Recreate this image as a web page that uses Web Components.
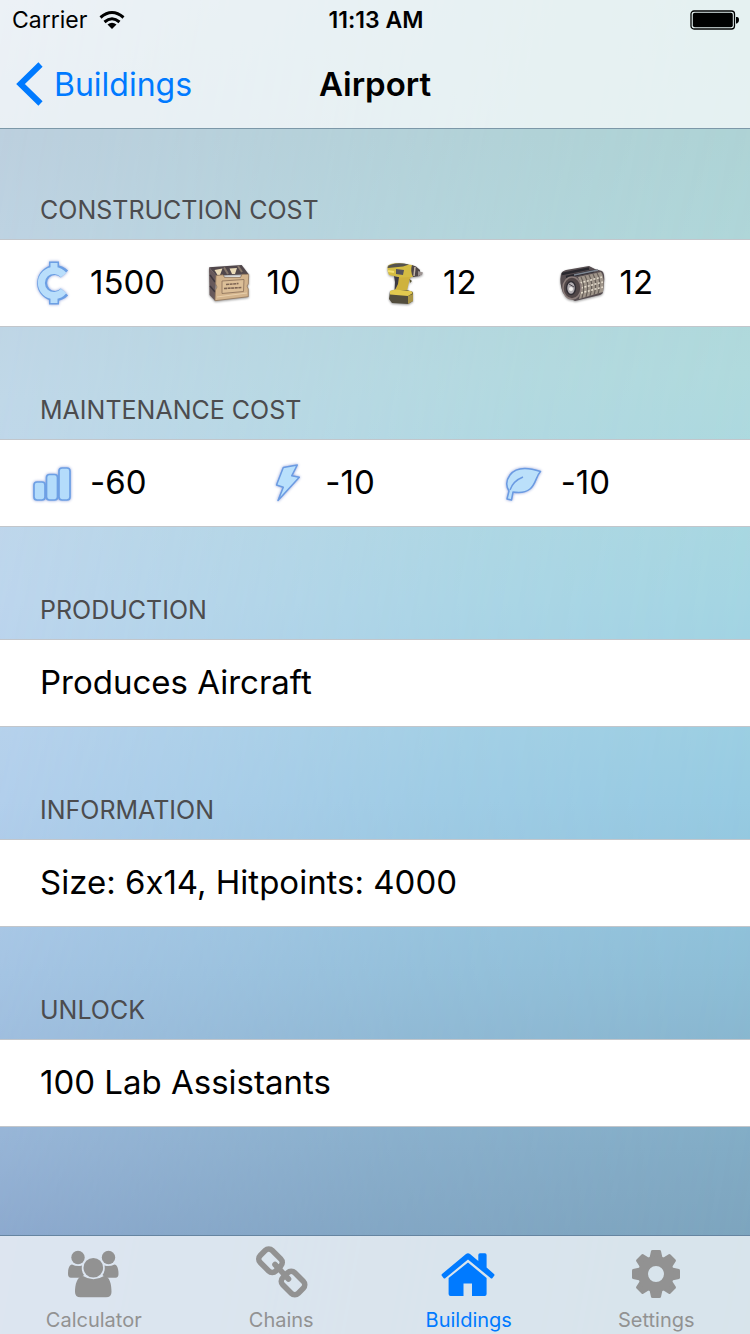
<!DOCTYPE html>
<html lang="en">
<head>
<meta charset="utf-8">
<meta name="viewport" content="width=device-width, initial-scale=1">
<title>Airport</title>
<style>
  body {
    margin: 0;
    font-family: Inter, Roboto, "Liberation Sans", sans-serif;
    /* keeps the x of "6x14" a letter */
    font-variant-ligatures: no-contextual;
    color: #000;
  }
</style>
</head>
<body>

<app-screen>
  <status-bar slot="top" carrier="Carrier" time="11:13 AM"></status-bar>
  <nav-bar slot="top" back="Buildings">Airport</nav-bar>

  <table-section heading="CONSTRUCTION COST">
    <cost-item icon="credits">1500</cost-item>
    <cost-item icon="crate">10</cost-item>
    <cost-item icon="drill">12</cost-item>
    <cost-item icon="coil">12</cost-item>
  </table-section>
  <table-section heading="MAINTENANCE COST">
    <cost-item icon="bars">-60</cost-item>
    <cost-item icon="bolt">-10</cost-item>
    <cost-item icon="leaf">-10</cost-item>
  </table-section>
  <table-section heading="PRODUCTION"><text-item>Produces Aircraft</text-item></table-section>
  <table-section heading="INFORMATION"><text-item>Size: 6x14, Hitpoints: 4000</text-item></table-section>
  <table-section heading="UNLOCK"><text-item>100 Lab Assistants</text-item></table-section>

  <tab-item slot="tabs" icon="people">Calculator</tab-item>
  <tab-item slot="tabs" icon="chain">Chains</tab-item>
  <tab-item slot="tabs" icon="house" selected>Buildings</tab-item>
  <tab-item slot="tabs" icon="gear">Settings</tab-item>
</app-screen>

<script>
/**
 * icons, all on a 60 x 60 grid
 */
const gearTeeth = [0, 45, 90, 135, 180, 225, 270, 315]
   .map(a => `<path d="M23.5 14L25 7Q25.3 6 26.5 6H33.5Q34.700 6 35 7L36.500 14Z" transform="rotate(${a} 30 30)"/>`)
   .join('');

const ICONS = {
   credits: `
<g class="glow" fill="none">
  <path d="M32 8.500V17M32 43V51.500" stroke="#6c9fe4" stroke-width="10"/>
  <path d="M42.500 21A13 13 0 1 0 42.500 39" stroke="#6c9fe4" stroke-width="10"/>
  <path d="M32 10V18M32 42V50" stroke="#b9defb" stroke-width="7"/>
  <path d="M41.700 22A12.600 12.600 0 1 0 41.700 38" stroke="#b9defb" stroke-width="7"/>
</g>`,
   crate: `
<g class="shade" stroke-linejoin="round">
  <path d="M10 14.300L42.700 12L49.700 21.300L17 22.500Z" fill="#51474b"/>
  <path d="M10 14.300L17 22.500L16 47.700L10.500 42Z" fill="#67595b"/>
  <path d="M11 22L16 29M11 33L16 39" stroke="#3e383e" stroke-width="1.500"/>
  <path d="M15.500 17L23.500 15.500L21 22L18.500 22Z M30.500 15.500L38 15L36 21L33 21Z" fill="#eadbb8"/>
  <path d="M25 14.500L29 21M39 13L43 19" stroke="#87786b" stroke-width="2"/>
  <path d="M17 22.500L24 21.800L25.500 24.500H41.500L43 21.300L49.700 21.300L49.300 31L48 33L49.300 36V43.700L16 47.700L16.500 37L18 34L16.700 31Z" fill="#d3b48d" stroke="#8a6e55" stroke-width=".7"/>
  <path d="M23 28L45 26.500L44.500 38.500L23 40.500Z" fill="#dcbf98" stroke="#8a6f58" stroke-width=".8"/>
  <path d="M27 31.500L39.500 30.500M25 35.500L43 34.500" stroke="#7d6453" stroke-width="1.600" stroke-dasharray="3 .6"/>
  <path d="M18 44L48 40" stroke="#e8cfab" stroke-width="1"/>
</g>`,
   drill: `
<g class="shade">
  <path d="M23 22L36 23L34 29L31.500 40H19L22.500 31Z" fill="#cfb23d"/>
  <path d="M19 23L24 24L23 31L19.500 38L20 29Z" fill="#3c3a43"/>
  <path d="M34.500 26L37 28L35 30Z" fill="#56502e"/>
  <path d="M12.500 14C14 10 20 10 27 10.500L37 12C41 14 41 20 38 24L26 24.500L14 22Q12 18 12.500 14Z" fill="#d4bc43"/>
  <path d="M12.500 14C16 10 25 9.500 34 11.500L28 13.500L13 15Z" fill="#55534d"/>
  <path d="M21 16L29 17L28 22L21 21Z" fill="#55545c"/>
  <path d="M13 18L19 19" stroke="#f3df70" stroke-width="2"/>
  <path d="M37 12L41 13.500L45 17V23L38 24Q35 18 37 12Z" fill="#4f4748"/>
  <path d="M40 14L39 23" stroke="#c4b7a8" stroke-width="1.500"/>
  <path d="M43 18L48 19.500L47 22L43 23Z" fill="#9b9290"/>
  <path d="M15 38L22 37H32L38 39V48L33 51L17 50L14 46Z" fill="#524d3d"/>
  <path d="M15 38L20 36.500L36 38L38 40L33 43L15 41.500Z" fill="#e1c94f"/>
  <path d="M33 43L38 41V48L33 51Z" fill="#aa9545"/>
</g>`,
   coil: `
<g class="shade">
  <path d="M9 21Q10 18 14 17L37 13L43 16L50 18Q53 20 52 30L51 39Q51 41 48 42L23 48Q16 45 11 40Q7 30 9 21Z" fill="#564d50"/>
  <path d="M10 21L37 15.500M14 24L42 18" stroke="#29282e" stroke-width="2.500"/>
  <path d="M22 22L46 17" stroke="#7e8691" stroke-width="1.500"/>
  <path d="M26 24L49 19Q53 24 51 39L27 46Q31 34 26 24Z" fill="#a0968b"/>
  <path d="M29 24Q34 32 30 45M33 23Q38 31 34 44M37 22Q42 30 38 43M41 21Q46 29 42 42M45 20Q50 28 46 41" fill="none" stroke="#655d57" stroke-width="1.200"/>
  <path d="M28 30L50 24M29 35L51 29M29 40L51 34" fill="none" stroke="#e7dfcf" stroke-width="1.500" stroke-dasharray="2 1.500"/>
  <ellipse cx="20" cy="35" rx="9" ry="11" fill="#514748" stroke="#8b7d7a" stroke-width="1.500"/>
  <ellipse cx="19" cy="35" rx="4.500" ry="6.500" fill="#b3afb3" stroke="#312e34" stroke-width="1.500"/>
  <circle cx="19" cy="36" r="2" fill="#f4f1ef"/>
  <path d="M17 31L22 34" stroke="#49434a"/>
</g>`,
   bars: `
<g class="glow" fill="#b4dcfb" stroke="#6da0e5" stroke-width="1.700">
  <rect x="12" y="29" width="11" height="18" rx="3"/>
  <rect x="24.500" y="21.500" width="11" height="25.500" rx="3"/>
  <rect x="37" y="15" width="11" height="32" rx="3"/>
</g>`,
   bolt: `
<path class="glow" d="M26.300 14.500L40.300 12L34.700 22.800L42.300 24.300L21 47.500L26.300 34.300L19.500 32Z" fill="#b9e0fc" stroke="#6b9be2" stroke-width="1.500" stroke-linejoin="round"/>`,
   leaf: `
<g class="glow" fill="#bbe0fa" stroke="#6b9be2" stroke-width="1.500" stroke-linejoin="round">
  <path d="M14 46L16 38Q11 30 17 22C23 14 34 14 47.500 18.500C43 23 43 31 37 36C32 40 26 40 20 39L18.500 47Z"/>
  <path d="M17 37Q20 28 30 24" fill="none"/>
</g>`,
   people: `
<g fill="currentColor">
  <circle cx="14" cy="13.500" r="6.700"/>
  <circle cx="44.500" cy="13.500" r="6.700"/>
  <circle cx="29.300" cy="23.700" r="9.800"/>
  <path d="M8 20.500Q13 23 18 21.500Q17 27 20 31L17 33.700H7Q4 33.700 4 30C4 25 5 21 8 20.500Z"/>
  <path d="M50.500 20.500Q45.500 23 40.500 21.500Q41.500 27 38.500 31L41.500 33.700H51.500Q54.500 33.700 54.500 30C54.500 25 53.500 21 50.500 20.500Z"/>
  <path d="M19 32Q29.300 38.500 40 32C46 32 47.500 41 47.500 48Q47.500 53.300 42 53.300H16.500Q11 53.300 11 48C11 41 13 32 19 32Z"/>
</g>`,
   chain: `
<g fill="none" stroke="currentColor" stroke-width="5.600" stroke-linecap="round">
  <rect x="8.500" y="8.200" width="22" height="17" rx="5" transform="rotate(45 19.500 16.700)"/>
  <rect x="31" y="30.500" width="22" height="17" rx="5" transform="rotate(45 42 39)"/>
  <path d="M24 20.500L37.500 35"/>
</g>`,
   house: `
<g fill="currentColor">
  <path d="M27 10Q29 8.500 31 10L39.300 17V11Q39.300 9.300 41 9.300H46Q47.600 9.300 47.600 11V23.500L55 30Q56 31 55 32L53.500 34Q52.500 35 51.500 34L29 15.500L6.500 34Q5.500 35 4.500 34L3 32Q2 31 3 30Z"/>
  <path d="M29 18.500L47.600 34V50Q47.600 52 45.600 52H33V39.500H24.500V52H11.500Q9.600 52 9.600 50V34Z"/>
</g>`,
   gear: `
<g fill="currentColor">
  ${gearTeeth}
  <circle cx="30" cy="30" r="13" fill="none" stroke="currentColor" stroke-width="10"/>
</g>`,
};

const svg = name => `<svg viewBox="0 0 60 60" width="60" height="60" aria-hidden="true">${ICONS[name]}</svg>`;

class BaseElement extends HTMLElement {
   constructor() {
      super();
      this.attachShadow({ mode: "open" });
   }

   // life cycle
   connectedCallback() {
      const template = document.createElement("template");
      template.innerHTML = this.render();
      this.shadowRoot.replaceChildren(template.content.cloneNode(true));
   }
}


/**
 * app-screen
 *    slot "top" : bars above the list, slot "tabs" : tab-item, default : table-section
 */
class AppScreen extends BaseElement {
   render() {
      return `
<style>
  :host {
    display: grid;
    grid-template-rows: auto 1fr auto;
    min-height: 100vh;
    isolation: isolate;
    position: relative;
    background: linear-gradient(#c4d3e4, #bdd0df 10%, #c2d8ea 30%, #c1d6ef 45%, #b8d0ee 60%, #abc6e7 73%, #9db7dc 86%, #92abd4 93%, #92abd4);
  }
  /* right-hand tint of the wallpaper */
  :host::before {
    content: "";
    position: absolute;
    inset: 0;
    z-index: -1;
    background: linear-gradient(#a9d3cf, #abd3d3 10%, #addadb 28%, #a1d5e1 45%, #94cae1 60%, #8bbdd5 73%, #81abc4 86%, #7ca4bd 93%, #7ca4bd);
    mask-image: linear-gradient(100deg, transparent, rgba(0, 0, 0, .7) 60%, #000);
  }
  header {
    background: rgba(255, 255, 255, .68);
    border-bottom: 1px solid #7c98a8;
  }
  main {
    display: flex;
    flex-direction: column;
    gap: 56px;
    padding: 54px 0;
  }
  nav {
    display: grid;
    grid-auto-flow: column;
    grid-auto-columns: 1fr;
    background: rgba(255, 255, 255, .7);
    border-top: 1px solid #6685a1;
  }
</style>
<header><slot name="top"></slot></header>
<main><slot></slot></main>
<nav><slot name="tabs"></slot></nav>`;
   }
}
customElements.define("app-screen", AppScreen);


class StatusBar extends BaseElement {
   render() {
      return `
<style>
  :host {
    display: grid;
    grid-template-columns: 1fr auto 1fr;
    align-items: center;
    height: 40px;
    padding: 0 10px 0 12px;
    font-size: 23px;
  }
  .left { display: flex; align-items: center; gap: 12px; }
  .time { font-weight: 600; }
  .battery { justify-self: end; }
</style>
<span class="left">${this.getAttribute("carrier")}
  <svg width="26" height="20" viewBox="0 0 26 20" aria-hidden="true">
    <g fill="none" stroke="#000" stroke-width="3">
      <path d="M1.500 7.500Q13 -2.500 24.500 7.500"/>
      <path d="M5.500 12Q13 5.500 20.500 12"/>
    </g>
    <path d="M8.500 14.500Q13 11 17.500 14.500L13 19Z"/>
  </svg>
</span>
<span class="time">${this.getAttribute("time")}</span>
<svg class="battery" width="50" height="20" viewBox="0 0 50 20" aria-hidden="true">
  <rect x="1" y="1" width="43.500" height="18" rx="3" fill="none" stroke="#000" stroke-width="1.300"/>
  <rect x="2.800" y="2.800" width="40" height="14.400" rx="2"/>
  <path d="M46 7H47Q49 7 49 10T47 13.500H46Z"/>
</svg>`;
   }
}
customElements.define("status-bar", StatusBar);


class NavBar extends BaseElement {
   render() {
      return `
<style>
  :host {
    display: grid;
    grid-template-columns: 1fr auto 1fr;
    align-items: center;
    height: 88px;
    padding: 0 16px;
    font-size: 32px;
  }
  a {
    display: flex;
    align-items: center;
    gap: 11px;
    color: #007aff;
    text-decoration: none;
  }
  h1 { margin: 0; font-size: 33px; font-weight: 600; }
</style>
<a href="#buildings">
  <svg width="27" height="44" viewBox="0 0 27 44" aria-hidden="true">
    <path d="M24.500 2.500L4.500 22L24.500 41.500" fill="none" stroke="currentColor" stroke-width="6"/>
  </svg>
  <span>${this.getAttribute("back")}</span>
</a>
<h1><slot></slot></h1>`;
   }
}
customElements.define("nav-bar", NavBar);


/**
 * table-section
 *    heading over one white row, items share the row's width equally
 */
class TableSection extends BaseElement {
   render() {
      return `
<style>
  :host { display: block; }
  h2 {
    margin: 0;
    padding: 0 40px 2px;
    font-size: 25px;
    font-weight: 400;
    line-height: 54px;
    color: #4c4c4e;
  }
  .row {
    display: grid;
    grid-auto-flow: column;
    grid-auto-columns: 1fr;
    align-items: center;
    height: 86px;
    padding: 0 22px;
    background: #fff;
    border: solid #c2c6cb;
    border-width: 1px 0;
  }
</style>
<h2>${this.getAttribute("heading")}</h2>
<div class="row"><slot></slot></div>`;
   }
}
customElements.define("table-section", TableSection);


class TextItem extends BaseElement {
   render() {
      return `
<style>
  :host { display: block; padding: 0 18px 2px; font-size: 33px; }
</style>
<slot></slot>`;
   }
}
customElements.define("text-item", TextItem);


class CostItem extends BaseElement {
   render() {
      return `
<style>
  :host { display: flex; align-items: center; gap: 8px; font-size: 33px; }
  svg { flex: none; }
  span { padding-bottom: 2px; }
  .glow { filter: drop-shadow(0 0 1.500px #8e9fd8); }
  .shade { filter: drop-shadow(0 1px 1px #9a9a9a); }
</style>
${svg(this.getAttribute("icon"))}
<span><slot></slot></span>`;
   }
}
customElements.define("cost-item", CostItem);


class TabItem extends BaseElement {
   render() {
      return `
<style>
  :host { display: block; color: #929292; }
  :host([selected]) { color: #007aff; }
  button {
    display: flex;
    flex-direction: column;
    align-items: center;
    gap: 4px;
    width: 100%;
    padding: 8px 0 2px;
    border: 0;
    background: none;
    color: inherit;
    font: inherit;
    font-size: 20px;
    line-height: 24px;
    cursor: pointer;
  }
</style>
<button type="button">${svg(this.getAttribute("icon"))}<span><slot></slot></span></button>`;
   }
}
customElements.define("tab-item", TabItem);
</script>
</body>
</html>
